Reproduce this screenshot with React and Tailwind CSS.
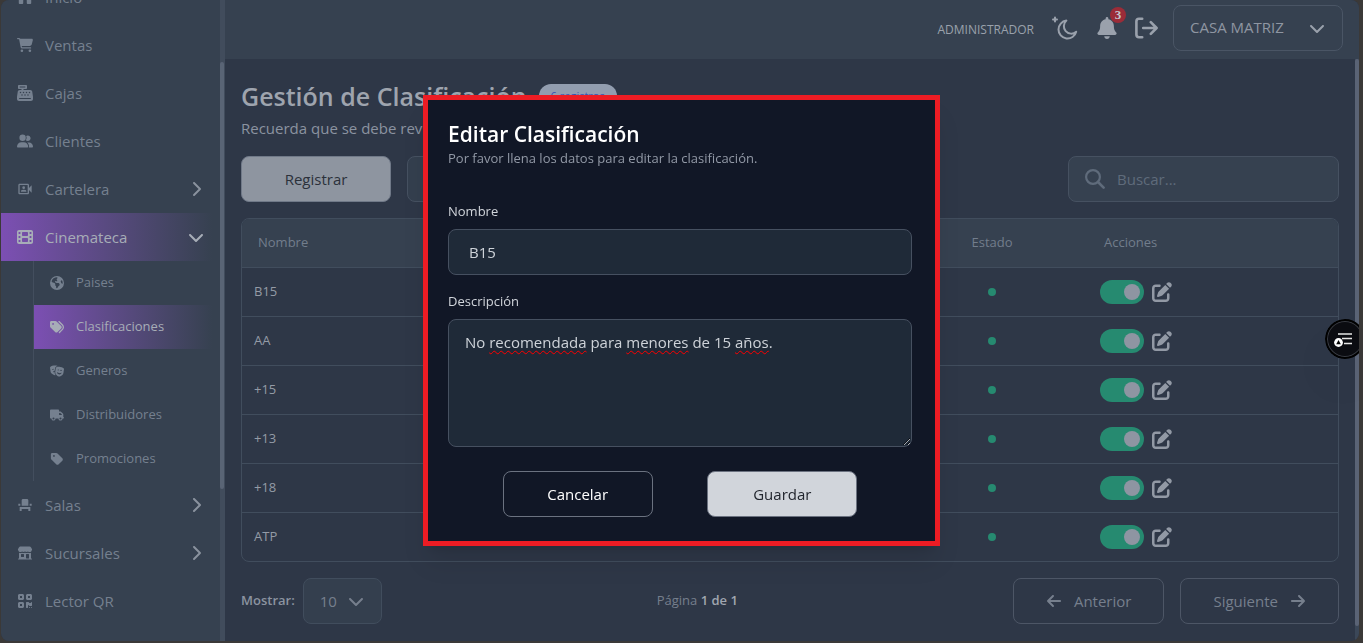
import { useState } from 'react'
import {
  FaArrowLeft,
  FaArrowRight,
  FaBell,
  FaCartShopping,
  FaCashRegister,
  FaChevronDown,
  FaChevronRight,
  FaEarthAmericas,
  FaFilm,
  FaHouse,
  FaMasksTheater,
  FaPenToSquare,
  FaQrcode,
  FaTag,
  FaTags,
  FaTruck,
  FaUserGroup,
} from 'react-icons/fa6'
import { HiBuildingStorefront } from 'react-icons/hi2'
import { MdEventSeat, MdOutlineVideoCameraFront } from 'react-icons/md'

const MENU = [
  { label: 'Inicio', icon: FaHouse },
  { label: 'Ventas', icon: FaCartShopping },
  { label: 'Cajas', icon: FaCashRegister },
  { label: 'Clientes', icon: FaUserGroup },
  { label: 'Cartelera', icon: MdOutlineVideoCameraFront, expandable: true },
  {
    label: 'Cinemateca',
    icon: FaFilm,
    expandable: true,
    active: true,
    children: [
      { label: 'Paises', icon: FaEarthAmericas },
      { label: 'Clasificaciones', icon: FaTags, active: true },
      { label: 'Generos', icon: FaMasksTheater },
      { label: 'Distribuidores', icon: FaTruck },
      { label: 'Promociones', icon: FaTag },
    ],
  },
  { label: 'Salas', icon: MdEventSeat, expandable: true },
  { label: 'Sucursales', icon: HiBuildingStorefront, expandable: true },
  { label: 'Lector QR', icon: FaQrcode },
]

const ROWS = ['B15', 'AA', '+15', '+13', '+18', 'ATP']

const ACTIVE = 'bg-linear-to-r from-[#7c4fb3] to-[#364150] text-[#a7adb7]'

function MoonIcon() {
  return (
    <svg viewBox="0 0 26 24" className="h-6 w-[26px]" fill="none" stroke="currentColor" strokeWidth="2" strokeLinejoin="round" strokeLinecap="round">
      <path d="M14.4 4.6a9 9 0 1 0 9.8 11.2 7.2 7.2 0 0 1-9.8-11.2Z" />
      <path d="M3 1.5v4M1 3.5h4" />
    </svg>
  )
}

function LogoutIcon() {
  return (
    <svg viewBox="0 0 24 22" className="h-[22px] w-6" fill="none" stroke="currentColor" strokeWidth="2.6" strokeLinejoin="round" strokeLinecap="round">
      <path d="M8.2 1.8H5a2.6 2.6 0 0 0-2.6 2.6v13.2a2.6 2.6 0 0 0 2.6 2.6h3.2" />
      <path d="M9.2 11h13M16.8 5.2 22.6 11l-5.8 5.8" />
    </svg>
  )
}

function SearchIcon() {
  return (
    <svg viewBox="0 0 20 20" className="size-5 shrink-0" fill="none" stroke="currentColor" strokeWidth="2.2" strokeLinecap="round">
      <circle cx="8" cy="8" r="6.9" />
      <path d="m13 13 5.6 5.6" strokeWidth="2.6" />
    </svg>
  )
}

function AssistIcon() {
  return (
    <svg viewBox="0 0 20 16" className="h-4 w-5" fill="none" stroke="#e5e5e5" strokeWidth="1.6">
      <path d="M5 3h14M9 7.5h10M11 12.5h8" />
      <circle cx="5.5" cy="11.5" r="4.4" fill="#fff" stroke="none" />
      <path d="m5.5 9 2.3 4.2H3.2Z" fill="#000" stroke="none" />
    </svg>
  )
}

function Sidebar() {
  return (
    <aside className="flex w-56 shrink-0 bg-[#364150]">
      <nav className="flex flex-1 flex-col justify-end overflow-hidden pb-4 text-[#75808f]">
        {MENU.map((item) => {
          const Icon = item.icon
          const Chevron = item.active ? FaChevronDown : FaChevronRight
          return (
            <div key={item.label} className="shrink-0">
              <a href="#" className={`mr-2 flex h-12 items-center pr-2 pl-4 text-[15px] ${item.active ? ACTIVE : ''}`}>
                <Icon className="mr-3 size-4" />
                {item.label}
                {item.expandable && <Chevron className={`ml-auto size-4 ${item.active ? '' : 'text-[#8a929e]'}`} />}
              </a>
              {item.children && (
                <div className="mr-2 ml-8 border-l border-[#434e5e]">
                  {item.children.map((sub) => {
                    const SubIcon = sub.icon
                    return (
                      <a key={sub.label} href="#" className={`flex h-11 items-center px-4 text-[13px] ${sub.active ? ACTIVE : ''}`}>
                        <SubIcon className="mr-3 size-3.5" />
                        {sub.label}
                      </a>
                    )
                  })}
                </div>
              )}
            </div>
          )
        })}
      </nav>
      <div className="flex w-[5px] flex-col bg-[#414c5c]">
        <div className="mt-[62px] h-2/3 w-1 rounded-full bg-[#596475]" />
      </div>
    </aside>
  )
}

function Header() {
  return (
    <header className="flex h-[59px] shrink-0 items-center justify-end bg-[#364150] pr-4 pb-1 text-[#9aa1ac]">
      <span className="mr-[18px] pt-1 text-xs">ADMINISTRADOR</span>
      <button type="button" aria-label="Cambiar tema" className="mr-[18px]">
        <MoonIcon />
      </button>
      <button type="button" aria-label="Notificaciones" className="relative mr-4">
        <FaBell className="size-[22px]" />
        <span className="absolute -top-2.5 -right-2 flex size-4 items-center justify-center rounded-full bg-[#9b2c38] font-['Liberation_Serif',serif] text-[13px] font-bold text-[#c3c6cc]">
          3
        </span>
      </button>
      <button type="button" aria-label="Salir" className="mr-[15px]">
        <LogoutIcon />
      </button>
      <div className="relative">
        <select aria-label="Sucursal" className="h-[46px] w-[170px] appearance-none rounded-lg border border-[#4a5565] bg-[#364150] px-4 text-[15px] text-[#8f96a2]">
          <option>CASA MATRIZ</option>
        </select>
        <FaChevronDown className="pointer-events-none absolute top-[15px] right-[18px] size-4 text-[#9aa1ac]" />
      </div>
    </header>
  )
}

function ClassificationTable() {
  return (
    <div className="mt-4 overflow-hidden rounded-lg border border-[#414d5d]">
      <table className="w-full table-fixed text-left text-[13px]">
        <thead className="bg-[#364150] text-[#727d8c]">
          <tr className="h-12">
            <th className="w-60 px-4 font-normal">Nombre</th>
            <th className="px-4 font-normal">Descripción</th>
            <th className="w-[192px] px-4 text-center font-normal">Estado</th>
            <th className="w-[250px] px-4 font-normal">Acciones</th>
          </tr>
        </thead>
        <tbody>
          {ROWS.map((name) => (
            <tr key={name} className="h-[49px] border-t border-[#414d5d] text-[#949ba6]">
              <td className="px-3">{name}</td>
              <td className="px-3" />
              <td className="px-3">
                <div className="mx-auto size-2 rounded-full bg-[#268a70]" />
              </td>
              <td className="px-3">
                <div className="flex items-center gap-2">
                  <label className="relative block h-6 w-11">
                    <input type="checkbox" defaultChecked aria-label={`Activar ${name}`} className="peer sr-only" />
                    <span className="block h-6 w-11 rounded-full bg-[#4b5563] peer-checked:bg-[#268a70]" />
                    <span className="absolute top-1 left-1 size-4 rounded-full bg-[#8e95a2] peer-checked:left-6" />
                  </label>
                  <button type="button" aria-label={`Editar ${name}`} className="text-[#9299a5]">
                    <FaPenToSquare className="size-5" />
                  </button>
                </div>
              </td>
            </tr>
          ))}
        </tbody>
      </table>
    </div>
  )
}

function Pagination() {
  return (
    <div className="mt-4 flex items-center justify-between text-[#767f8d]">
      <div className="flex items-center gap-2">
        <label htmlFor="limit" className="text-[13px] font-semibold text-[#8b93a0]">Mostrar:</label>
        <div className="relative">
          <select id="limit" className="h-[46px] w-[79px] appearance-none rounded-lg border border-[#414d5d] bg-[#343f4e] px-4 text-[15px]">
            <option>10</option>
          </select>
          <FaChevronDown className="pointer-events-none absolute top-[15px] right-[18px] size-4" />
        </div>
      </div>
      <p className="text-[13px]">
        Página <b className="font-semibold text-[#a0a6b0]">1 de 1</b>
      </p>
      <div className="flex gap-4 text-[15px]">
        <button type="button" className="flex h-[46px] items-center gap-3 rounded-lg border border-[#4d5666] px-8">
          <FaArrowLeft className="size-4" />
          Anterior
        </button>
        <button type="button" className="flex h-[46px] items-center gap-3 rounded-lg border border-[#4d5666] px-8">
          Siguiente
          <FaArrowRight className="size-4" />
        </button>
      </div>
    </div>
  )
}

const MISSPELLED = ['recomendada', 'menores', 'años']

function EditModal() {
  const [text, setText] = useState('No recomendada para menores de 15 años.')

  return (
    <div className="fixed inset-0 flex items-center justify-center pb-0.5">
      <form className="w-[517px] border-5 border-[#ed1c24] bg-[#111726] pt-5 pr-[23px] pb-6 pl-5 shadow-xl">
        <h2 className="text-[21px] leading-7 font-semibold text-white">Editar Clasificación</h2>
        <p className="text-[13px] leading-5 text-[#9299a6]">Por favor llena los datos para editar la clasificación.</p>

        <label htmlFor="name" className="mt-[33px] block text-[13px] leading-5 text-[#d1d5db]">Nombre</label>
        <input id="name" defaultValue="B15" className="mt-2 h-[46px] w-full rounded-lg border border-[#465060] bg-[#1f2a38] px-5 text-[15px] text-[#ced3d9]" />

        <label htmlFor="description" className="mt-4 block text-[13px] leading-5 text-[#d1d5db]">Descripción</label>
        <div className="relative mt-2">
          <textarea
            id="description"
            value={text}
            onChange={(e) => setText(e.target.value)}
            className="block h-32 w-full resize-y rounded-lg border border-[#465060] bg-[#1f2a38] px-4 py-2.5 text-[15px] leading-6 text-[#ced3d9]"
          />
          {/* Spelling marks under the typed text */}
          <div aria-hidden="true" className="pointer-events-none absolute inset-0 border border-transparent px-4 py-2.5 text-[15px] leading-6 whitespace-pre-wrap text-transparent">
            {text.split(/([\s.]+)/).map((word, i) => (
              <span key={i} className={MISSPELLED.includes(word) ? 'underline decoration-[#ff0000] decoration-wavy decoration-1 underline-offset-2 [text-decoration-skip-ink:none]' : ''}>
                {word}
              </span>
            ))}
          </div>
        </div>

        <div className="mt-6 flex justify-evenly text-[15px]">
          <button type="button" className="h-[46px] w-[150px] rounded-lg border border-[#6b7280] text-white">Cancelar</button>
          <button type="submit" className="h-[46px] w-[150px] rounded-lg border border-[#6b7280] bg-[#d1d5db] text-[#22262e]">Guardar</button>
        </div>
      </form>
    </div>
  )
}

export default function App() {
  return (
    <div className="h-screen bg-[#3b3938] pr-1 pb-0.5 pl-px font-['Open_Sans',sans-serif]">
      <div className="flex h-full overflow-hidden rounded-lg bg-[#2e3747]">
        <Sidebar />
        <div className="flex min-w-0 flex-1 flex-col">
          <Header />
          <div className="flex min-h-0 flex-1">
            <main className="min-w-0 flex-1 overflow-hidden px-4 pt-[19px]">
              <div className="flex items-center gap-3">
                <h1 className="text-[25px] leading-9 font-semibold text-[#9ea4ae]">Gestión de Clasificación</h1>
                <span className="rounded-full bg-[#929daf] px-3 py-1 text-[11px] leading-4 text-[#3554b4]">6 registros</span>
              </div>
              <p className="text-[15px] leading-7 text-[#8b93a0]">Recuerda que se debe revisar la clasificación.</p>

              <div className="mt-3.5 flex gap-4 text-[15px]">
                <button type="button" className="h-[46px] w-[150px] rounded-lg border border-[#707988] bg-[#8e95a0] text-[#2b313b]">Registrar</button>
                <button type="button" className="h-[46px] w-[150px] rounded-lg border border-[#465161] bg-[#343f4e] text-[#8b93a0]">Reporte</button>
                <label className="ml-auto flex h-[46px] w-[271px] items-center gap-3 rounded-lg border border-[#465161] bg-[#364150] px-4 text-[#5f6b7b]">
                  <SearchIcon />
                  <input type="search" placeholder="Buscar..." aria-label="Buscar" className="min-w-0 flex-1 bg-transparent placeholder:text-[#5f6b7b]" />
                </label>
              </div>

              <ClassificationTable />
              <Pagination />
            </main>
            <div className="flex w-1 flex-col bg-[#3b4758] pb-[15px]">
              <div className="flex-1 rounded-full bg-[#5a6375]" />
            </div>
          </div>
        </div>
      </div>

      <EditModal />

      <div className="fixed top-[319px] right-1 h-10 w-[34px] overflow-hidden rounded-l-full shadow-2xl">
        <button type="button" aria-label="Asistente" className="flex size-10 items-center rounded-full border-2 border-black bg-[#0b0c11] pl-1.5 ring-1 ring-[#3a3d44] ring-inset">
          <AssistIcon />
        </button>
      </div>
    </div>
  )
}
